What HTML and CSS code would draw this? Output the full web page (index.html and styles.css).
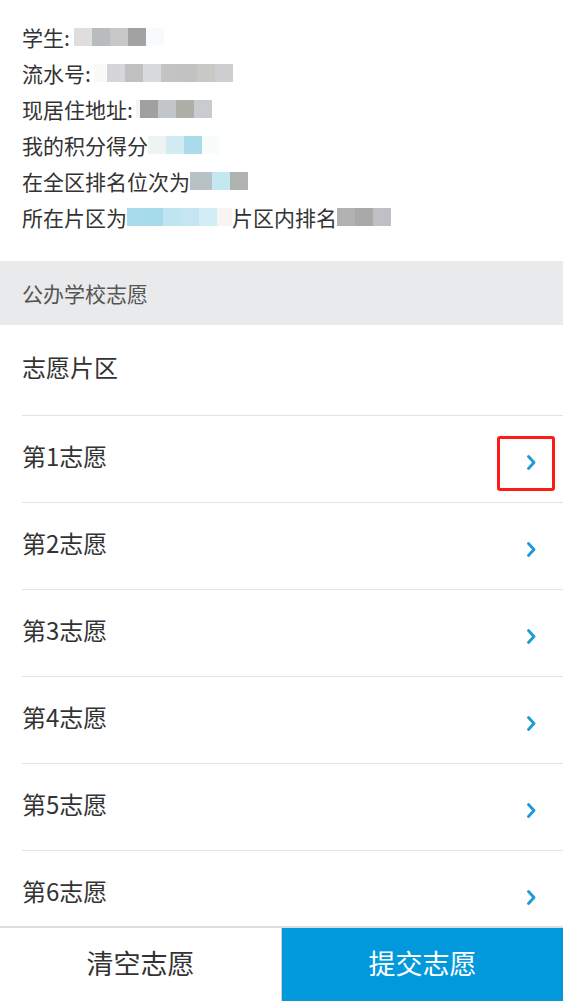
FILE: index.html
```html
<!DOCTYPE html>
<html lang="zh-CN">
<head>
<meta charset="utf-8">
<title>志愿填报</title>
<link rel="stylesheet" href="styles.css">
</head>
<body>
<div class="info">
  <div class="line">学生:<span class="mosaic gap6"><i class="m c-e0"></i><i class="m c-b8"></i><i class="m c-c6"></i><i class="m c-a3"></i><i class="m c-f8"></i></span></div>
  <div class="line">流水号:<span class="mosaic gap4"><i class="m narrow c-f9"></i><i class="m c-d6"></i><i class="m c-c0"></i><i class="m c-d8"></i><i class="m c-c3"></i><i class="m c-c2"></i><i class="m c-c8"></i><i class="m c-cf"></i></span></div>
  <div class="line">现居住地址:<span class="mosaic gap4"><i class="m thin c-f4"></i><i class="m c-a0"></i><i class="m c-c2b"></i><i class="m c-ae"></i><i class="m c-c8b"></i></span></div>
  <div class="line">我的积分得分<span class="mosaic"><i class="m c-f1"></i><i class="m c-d3"></i><i class="m c-aa"></i><i class="m c-f9b"></i></span></div>
  <div class="line">在全区排名位次为<span class="mosaic"><i class="m wide c-b8c"></i><i class="m c-c3e"></i><i class="m c-b0"></i></span></div>
  <div class="line">所在片区为<span class="mosaic"><i class="m c-a9"></i><i class="m c-a6"></i><i class="m c-bf"></i><i class="m c-c4"></i><i class="m c-d2"></i><i class="m short c-f7"></i></span>片区内排名<span class="mosaic"><i class="m c-b1"></i><i class="m c-a9g"></i><i class="m c-c0c"></i></span></div>
</div>

<div class="section">公办学校志愿</div>

<div class="list">
  <div class="row first"><span class="label">志愿片区</span></div>
  <div class="row">
    <span class="label">第1志愿</span>
    <svg class="chev" width="9" height="15" viewBox="0 0 9 15"><polyline points="1.5,1.5 7,7.5 1.5,13.5"/></svg>
    <span class="highlight"></span>
  </div>
  <div class="row"><span class="label">第2志愿</span><svg class="chev" width="9" height="15" viewBox="0 0 9 15"><polyline points="1.5,1.5 7,7.5 1.5,13.5"/></svg></div>
  <div class="row"><span class="label">第3志愿</span><svg class="chev" width="9" height="15" viewBox="0 0 9 15"><polyline points="1.5,1.5 7,7.5 1.5,13.5"/></svg></div>
  <div class="row"><span class="label">第4志愿</span><svg class="chev" width="9" height="15" viewBox="0 0 9 15"><polyline points="1.5,1.5 7,7.5 1.5,13.5"/></svg></div>
  <div class="row"><span class="label">第5志愿</span><svg class="chev" width="9" height="15" viewBox="0 0 9 15"><polyline points="1.5,1.5 7,7.5 1.5,13.5"/></svg></div>
  <div class="row"><span class="label">第6志愿</span><svg class="chev" width="9" height="15" viewBox="0 0 9 15"><polyline points="1.5,1.5 7,7.5 1.5,13.5"/></svg></div>
</div>

<div class="footer">
  <div class="btn clear">清空志愿</div>
  <div class="btn submit">提交志愿</div>
</div>
</body>
</html>
```

FILE: styles.css
```css
* { box-sizing: border-box; }
html, body { margin: 0; padding: 0; }
body {
  font-family: "Noto Sans CJK SC", "Microsoft YaHei", sans-serif;
  color: #333;
  background: #fff;
  width: 563px;
  overflow: hidden;
}

.info {
  padding: 19px 22px 26px;
  font-size: 21px;
  line-height: 36px;
}
.line {
  display: flex;
  align-items: center;
  height: 36px;
  white-space: nowrap;
}
.mosaic { display: inline-flex; }
.gap6 { margin-left: 4px; }
.gap4 { margin-left: 3px; }
.m { display: inline-block; width: 18px; height: 18px; }
.m.narrow { width: 13px; }
.m.thin { width: 4px; }
.m.wide { width: 22px; }
.m.short { width: 15px; }

.c-e0 { background: #e0dedd; }
.c-b8 { background: #b8bcbd; }
.c-c6 { background: #c6c7c6; }
.c-a3 { background: #a3a2a3; }
.c-f8 { background: #f8fbfc; }
.c-f9 { background: #f9f9f7; }
.c-d6 { background: #d6d5d7; }
.c-c0 { background: #c0c0c1; }
.c-d8 { background: #d8dadd; }
.c-c3 { background: #c3c3c3; }
.c-c2 { background: #c2c2c2; }
.c-c8 { background: #c8c8c6; }
.c-cf { background: #cfcfd2; }
.c-f4 { background: #f4f4f4; }
.c-a0 { background: #a0a19f; }
.c-c2b { background: #c2c6c9; }
.c-ae { background: #aeafa9; }
.c-c8b { background: #c8cbcf; }
.c-f1 { background: #f1f3f3; }
.c-d3 { background: #d3ecf3; }
.c-aa { background: #aadcec; }
.c-f9b { background: #f9fcfd; }
.c-b8c { background: #b8c1c5; }
.c-c3e { background: #c3e8f1; }
.c-b0 { background: #b0b1b1; }
.c-a9 { background: #a9dcea; }
.c-a6 { background: #a6dbe9; }
.c-bf { background: #bfe5f0; }
.c-c4 { background: #c4e6f0; }
.c-d2 { background: #d2edf5; }
.c-f7 { background: #f7f4f2; }
.c-b1 { background: #b1b1b1; }
.c-a9g { background: #a9a9a9; }
.c-c0c { background: #c0c0c4; }

.section {
  height: 64px;
  background: #e9eaec;
  padding-left: 22px;
  display: flex;
  align-items: center;
  font-size: 21px;
  color: #555;
}

.list {
  padding-left: 22px;
  padding-bottom: 75px;
}
.row {
  position: relative;
  display: flex;
  align-items: center;
  justify-content: space-between;
  height: 87px;
  padding-right: 27px;
  border-bottom: 1px solid #e3e3e3;
  font-size: 24px;
  color: #333;
}
.row.first { height: 91px; }
.label { margin-bottom: 8px; }
.chev {
  margin-top: 6px;
  fill: none;
  stroke: #1c9ad9;
  stroke-width: 2.8;
  stroke-linecap: round;
  stroke-linejoin: round;
}
.highlight {
  position: absolute;
  top: 20px;
  right: 8px;
  width: 58px;
  height: 55px;
  border: 3px solid #ff1a1a;
  border-radius: 3px;
}

.footer {
  position: fixed;
  left: 0;
  right: 0;
  bottom: 0;
  height: 75px;
  display: flex;
  border-top: 2px solid #dcdcdc;
  background: #fff;
}
.btn {
  flex: 1;
  display: flex;
  align-items: center;
  justify-content: center;
  font-size: 27px;
  padding-bottom: 4px;
}
.btn.clear {
  color: #333;
  border-right: 1px solid #cfcfcf;
}
.btn.submit {
  background: #0299dc;
  color: #fff;
}
```
